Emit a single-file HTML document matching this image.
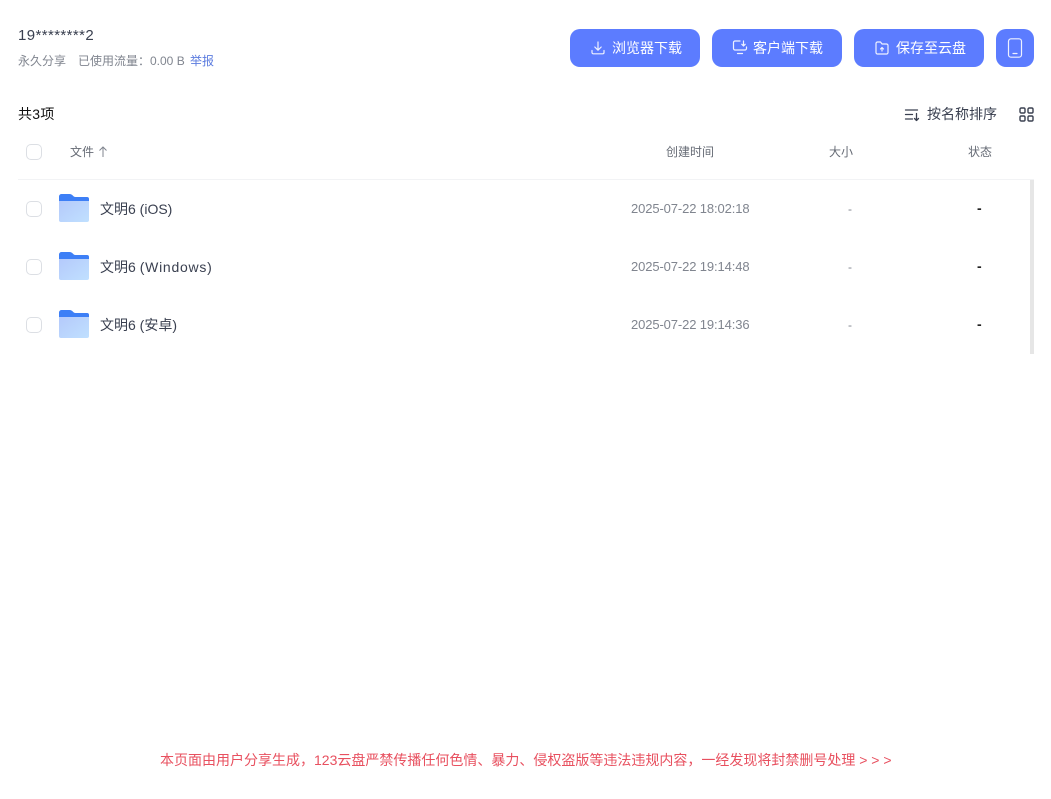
<!DOCTYPE html>
<html lang="zh-CN">
<head>
<meta charset="utf-8">
<title>123云盘</title>
<style>
html,body{margin:0;padding:0;background:#fff;}
body{width:1051px;height:799px;position:relative;overflow:hidden;font-family:"Liberation Sans","Noto Sans CJK SC",sans-serif;}
.t{position:absolute;white-space:nowrap;line-height:20px;}
.btn{position:absolute;top:29px;height:38px;background:#5c7cff;border-radius:10px;}
.btn span{position:absolute;top:9px;line-height:20px;font-size:14px;color:#fff;white-space:nowrap;}
.btn svg{position:absolute;fill:none;stroke:#eef1ff;stroke-width:1.2;stroke-linecap:round;stroke-linejoin:round;}
.cb{position:absolute;left:26px;width:14px;height:14px;border:1px solid #dcdfe4;border-radius:5px;background:#fff;}
.folder{position:absolute;left:58px;}
.name{font-size:14px;color:#3a4050;left:100px;}
.date{font-size:13px;letter-spacing:-.12px;color:#80858f;left:631px;}
.size{font-size:12px;color:#80858f;left:848px;}
.st{font-size:14px;font-weight:bold;color:#222;left:977px;}
.h{font-size:12px;color:#666b75;top:142px;}
</style>
</head>
<body>
<div class="t" style="left:18px;top:26px;font-size:15px;letter-spacing:.4px;color:#3a4050;">19********2</div>
<div class="t" style="left:18px;top:51px;font-size:12px;color:#80858f;">永久分享</div>
<div class="t" style="left:78px;top:51px;font-size:12px;color:#80858f;">已使用流量：0.00 B</div>
<div class="t" style="left:190px;top:51px;font-size:12px;color:#5c7cdf;">举报</div>

<div class="btn" style="left:570px;width:130px;">
<svg style="left:20px;top:11px" width="16" height="16" viewBox="0 0 16 16"><path d="M8 2v8M4.800 7 8 10.200 11.200 7M2 10.500v2a1.300 1.300 0 0 0 1.300 1.300h9.400a1.300 1.300 0 0 0 1.300-1.300v-2"/></svg>
<span style="left:42px">浏览器下载</span></div>
<div class="btn" style="left:712px;width:130px;">
<svg style="left:20px;top:10px" width="16" height="17" viewBox="0 0 16 17"><path d="M8 2H3a1.500 1.500 0 0 0-1.500 1.500v6A1.500 1.500 0 0 0 3 11h10a1.500 1.500 0 0 0 1.500-1.500V8M5.500 14.500h5M11.500 2v5M9.800 5.300l1.700 1.700 1.700-1.700"/></svg>
<span style="left:41px">客户端下载</span></div>
<div class="btn" style="left:854px;width:130px;">
<svg style="left:20px;top:11px" width="16" height="16" viewBox="0 0 16 16"><path d="M2 3.500A1.500 1.500 0 0 1 3.500 2h3l1.500 2h4.500A1.500 1.500 0 0 1 14 5.500v7a1.500 1.500 0 0 1-1.500 1.500h-9A1.500 1.500 0 0 1 2 12.500zM8 11V7.500M6.500 9 8 7.500 9.500 9"/></svg>
<span style="left:42px">保存至云盘</span></div>
<div class="btn" style="left:996px;width:38px;">
<svg style="left:10px;top:9px" width="18" height="20" viewBox="0 0 18 20"><rect x="2.500" y="0.800" width="13" height="18.400" rx="2.500"/><path d="M7 15.500h4"/></svg></div>

<div class="t" style="left:18px;top:104px;font-size:14px;letter-spacing:.3px;color:#111;">共3项</div>
<svg style="position:absolute;left:904px;top:108px" width="16" height="14" viewBox="0 0 16 14" fill="none" stroke="#3a4050" stroke-width="1.300" stroke-linecap="round" stroke-linejoin="round"><path d="M1.500 2h12M1.500 6.500h7M1.500 11h7M12.500 5.500v7M10.500 10.500l2 2 2-2"/></svg>
<div class="t" style="left:927px;top:104px;font-size:14px;color:#3a4050;">按名称排序</div>
<svg style="position:absolute;left:1019px;top:107px" width="15" height="15" viewBox="0 0 15 15" fill="none" stroke="#3a4050" stroke-width="1.400"><rect x="1" y="1" width="5" height="5" rx="1.300"/><rect x="9" y="1" width="5" height="5" rx="1.300"/><rect x="1" y="9" width="5" height="5" rx="1.300"/><rect x="9" y="9" width="5" height="5" rx="1.300"/></svg>

<div class="cb" style="top:144px"></div>
<div class="t h" style="left:70px;">文件</div>
<svg style="position:absolute;left:98px;top:146px" width="10" height="12" viewBox="0 0 10 12" fill="none" stroke="#80858f" stroke-width="1"><path d="M5 1v10M1.500 4.500 5 1l3.500 3.500"/></svg>
<div class="t h" style="left:666px;">创建时间</div>
<div class="t h" style="left:829px;">大小</div>
<div class="t h" style="left:968px;">状态</div>
<div style="position:absolute;left:18px;top:179px;width:1016px;height:1px;background:#f2f3f5;"></div>
<div style="position:absolute;left:1030px;top:180px;width:4px;height:174px;background:#e6e6e6;"></div>

<svg width="0" height="0" style="position:absolute"><defs>
<linearGradient id="g" x1="0" y1="0" x2="1" y2="1"><stop offset="0" stop-color="#b4c9fb"/><stop offset="1" stop-color="#c0e0ff"/></linearGradient>
</defs></svg>

<div class="cb" style="top:201px"></div>
<svg class="folder" style="top:194px" width="32" height="30" viewBox="0 0 32 30"><path d="M1 6h30v20a2 2 0 0 1-2 2H3a2 2 0 0 1-2-2z" fill="url(#g)"/><path d="M1 2.500A2.500 2.500 0 0 1 3.500 0h8c1.500 0 2.500.7 3.500 1.800.7.800 1.200 1.200 2.500 1.200H29a2 2 0 0 1 2 2v2H1z" fill="#3d7ff6"/></svg>
<div class="t name" style="top:199px">文明6 (iOS)</div>
<div class="t date" style="top:199px">2025-07-22 18:02:18</div>
<div class="t size" style="top:199px">-</div>
<div class="t st" style="top:198px">-</div>

<div class="cb" style="top:259px"></div>
<svg class="folder" style="top:252px" width="32" height="30" viewBox="0 0 32 30"><path d="M1 6h30v20a2 2 0 0 1-2 2H3a2 2 0 0 1-2-2z" fill="url(#g)"/><path d="M1 2.500A2.500 2.500 0 0 1 3.500 0h8c1.500 0 2.500.7 3.500 1.800.7.800 1.200 1.200 2.500 1.200H29a2 2 0 0 1 2 2v2H1z" fill="#3d7ff6"/></svg>
<div class="t name" style="top:257px">文明6 <span style="letter-spacing:.75px">(Windows)</span></div>
<div class="t date" style="top:257px">2025-07-22 19:14:48</div>
<div class="t size" style="top:257px">-</div>
<div class="t st" style="top:256px">-</div>

<div class="cb" style="top:317px"></div>
<svg class="folder" style="top:310px" width="32" height="30" viewBox="0 0 32 30"><path d="M1 6h30v20a2 2 0 0 1-2 2H3a2 2 0 0 1-2-2z" fill="url(#g)"/><path d="M1 2.500A2.500 2.500 0 0 1 3.500 0h8c1.500 0 2.500.7 3.500 1.800.7.800 1.200 1.200 2.500 1.200H29a2 2 0 0 1 2 2v2H1z" fill="#3d7ff6"/></svg>
<div class="t name" style="top:315px">文明6 (安卓)</div>
<div class="t date" style="top:315px">2025-07-22 19:14:36</div>
<div class="t size" style="top:315px">-</div>
<div class="t st" style="top:314px">-</div>

<div class="t" style="left:160px;top:750px;font-size:14px;color:#e8505f;">本页面由用户分享生成，123云盘严禁传播任何色情、暴力、侵权盗版等违法违规内容，一经发现将封禁删号处理 &gt; &gt; &gt;</div>
</body>
</html>
